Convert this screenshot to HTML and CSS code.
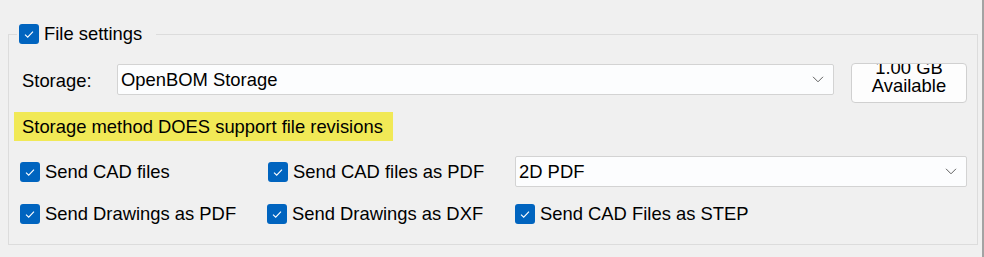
FILE: index.html
```html
<!DOCTYPE html>
<html>
<head>
<meta charset="utf-8">
<link rel="stylesheet" href="styles.css">
</head>
<body>
<div class="window">
  <div class="group">
    <div class="legend">
      <span class="cb"><svg viewBox="0 0 20 20" width="20" height="20"><path d="M6 10.6 L8.7 13.2 L14 7.6" fill="none" stroke="#fff" stroke-width="1.1"/></svg></span>
      <span>File settings</span>
    </div>
    <div class="storage-row">
      <span class="label">Storage:</span>
      <div class="select wide">
        <span>OpenBOM Storage</span>
        <svg class="chev" viewBox="0 0 12 7" width="12" height="7"><path d="M1 0.8 L6 5.8 L11 0.8" fill="none" stroke="#5f5f5f" stroke-width="1"/></svg>
      </div>
      <div class="button"><span>1.00 GB</span><span>Available</span></div>
    </div>
    <div class="notice">Storage method DOES support file revisions</div>
    <div class="options">
      <label class="opt"><span class="cb"><svg viewBox="0 0 20 20" width="20" height="20"><path d="M6 10.6 L8.7 13.2 L14 7.6" fill="none" stroke="#fff" stroke-width="1.1"/></svg></span>Send CAD files</label>
      <label class="opt"><span class="cb"><svg viewBox="0 0 20 20" width="20" height="20"><path d="M6 10.6 L8.7 13.2 L14 7.6" fill="none" stroke="#fff" stroke-width="1.1"/></svg></span>Send CAD files as PDF</label>
      <div class="select full">
        <span>2D PDF</span>
        <svg class="chev" viewBox="0 0 12 7" width="12" height="7"><path d="M1 0.8 L6 5.8 L11 0.8" fill="none" stroke="#5f5f5f" stroke-width="1"/></svg>
      </div>
      <label class="opt"><span class="cb"><svg viewBox="0 0 20 20" width="20" height="20"><path d="M6 10.6 L8.7 13.2 L14 7.6" fill="none" stroke="#fff" stroke-width="1.1"/></svg></span>Send Drawings as PDF</label>
      <label class="opt shift"><span class="cb"><svg viewBox="0 0 20 20" width="20" height="20"><path d="M6 10.6 L8.7 13.2 L14 7.6" fill="none" stroke="#fff" stroke-width="1.1"/></svg></span>Send Drawings as DXF</label>
      <label class="opt"><span class="cb"><svg viewBox="0 0 20 20" width="20" height="20"><path d="M6 10.6 L8.7 13.2 L14 7.6" fill="none" stroke="#fff" stroke-width="1.1"/></svg></span>Send CAD Files as STEP</label>
    </div>
  </div>
</div>
</body>
</html>
```

FILE: styles.css
```css
* { box-sizing: border-box; }
html, body {
  margin: 0;
  padding: 0;
  background: #f0f0f0;
}
body {
  font-family: "Liberation Sans", Arial, sans-serif;
  font-size: 18.4px;
  color: #000;
}
.window {
  width: 984px;
  height: 257px;
  padding: 34px 0 0 8px;
  border-right: 2px solid #a3a3a3;
  overflow: hidden;
}
.group {
  width: 970px;
  height: 211px;
  border: 1px solid #dcdcdc;
}
.legend {
  display: flex;
  align-items: center;
  width: fit-content;
  height: 20px;
  margin: -11px 0 0 8px;
  padding: 0 14px 0 2px;
  gap: 5px;
  background: #f0f0f0;
  line-height: 20px;
}
.cb {
  flex: 0 0 20px;
  width: 20px;
  height: 20px;
  border-radius: 3px;
  background: #0064bf;
  display: block;
}
.cb svg { display: block; }
.storage-row {
  display: flex;
  align-items: flex-start;
  margin-top: 19px;
  padding-left: 13px;
  height: 40px;
}
.label {
  flex: 0 0 95px;
  height: 31px;
  margin-top: 1px;
  padding-top: 3px;
  display: flex;
  align-items: center;
}
.select {
  display: flex;
  align-items: center;
  justify-content: space-between;
  height: 31px;
  padding: 0 9px 0 3px;
  background: #fcfdfe;
  border: 1px solid #d3d3d3;
  border-radius: 2px;
}
.select.wide {
  width: 717px;
  margin-top: 1px;
  margin-right: 17px;
}
.select.full {
  width: 452px;
}
.chev { display: block; }
.button {
  width: 116px;
  height: 40px;
  display: flex;
  flex-direction: column;
  align-items: center;
  justify-content: center;
  padding-bottom: 12px;
  line-height: 18px;
  background: #fdfdfd;
  border: 1px solid #d0d0d0;
  border-radius: 4px;
  overflow: hidden;
}
.notice {
  display: flex;
  align-items: center;
  width: fit-content;
  height: 29px;
  margin: 9px 0 0 5px;
  padding: 0 10px 0 8px;
  background: #f1e956;
}
.options {
  display: grid;
  grid-template-columns: 248px 247px 452px;
  grid-template-rows: 31px 20px;
  row-gap: 17px;
  align-items: center;
  margin: 15px 0 0 11px;
}
.opt {
  display: flex;
  align-items: center;
  gap: 5px;
  height: 20px;
  white-space: nowrap;
}
.opt.shift { margin-left: -1px; }
```
